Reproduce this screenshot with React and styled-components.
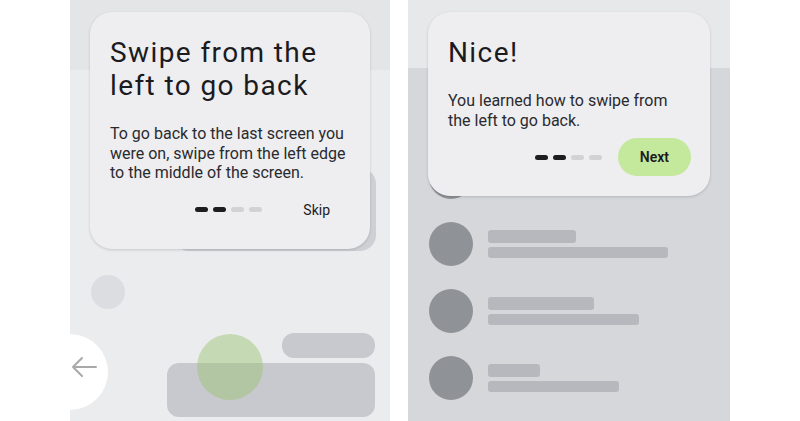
import React from 'react';
import styled, { createGlobalStyle } from 'styled-components';

const GlobalStyle = createGlobalStyle`
  html, body {
    margin: 0;
    padding: 0;
    background: #ffffff;
    font-family: Roboto, "Noto Sans", "Liberation Sans", sans-serif;
  }
`;

const Stage = styled.div`
  display: flex;
  gap: 18px;
  padding-left: 70px;
  width: 800px;
  height: 421px;
  box-sizing: border-box;
`;

const Phone = styled.div`
  position: relative;
  overflow: hidden;
  width: ${(p) => p.$w}px;
  height: 421px;
  box-sizing: border-box;
  display: flex;
  flex-direction: column;
  background: linear-gradient(${(p) => p.$top} 0 ${(p) => p.$band}px, ${(p) => p.$body} ${(p) => p.$band}px);
  padding: ${(p) => p.$pad};
`;

/* tutorial card floating over the screen */
const Card = styled.div`
  position: absolute;
  top: 12px;
  left: 20px;
  width: ${(p) => p.$w}px;
  box-sizing: border-box;
  padding: 24px 20px 20px 20px;
  background: #eeeef0;
  border-radius: 22px;
  box-shadow: 0 1px 3px rgba(0, 0, 0, 0.16);
  z-index: 2;
`;

const Title = styled.h1`
  margin: 0;
  font-size: 28px;
  line-height: 33px;
  font-weight: 400;
  color: #1b1b1f;
  letter-spacing: 1.4px;
`;

const Body = styled.p`
  margin: 22px 0 0;
  font-size: 16px;
  line-height: 19.5px;
  color: #2a2a2e;
`;

const Footer = styled.div`
  margin-top: 8px;
  height: 38px;
  display: flex;
  justify-content: flex-end;
  align-items: center;
`;

const Dots = styled.div`
  display: flex;
  gap: 5px;
  margin-right: ${(p) => p.$space}px;
`;

const Dot = styled.span`
  width: 13px;
  height: 5px;
  border-radius: 3px;
  background: ${(p) => (p.$on ? '#1d1d1f' : '#d2d2d5')};
`;

const Action = styled.button`
  height: 38px;
  border: none;
  border-radius: 19px;
  padding: 0 ${(p) => (p.$filled ? 22 : 20)}px;
  margin-right: ${(p) => (p.$filled ? -1 : 0)}px;
  background: ${(p) => (p.$filled ? '#c4e99c' : 'transparent')};
  font-family: inherit;
  font-size: 14px;
  font-weight: ${(p) => (p.$filled ? 600 : 400)};
  color: #1c1c1e;
`;

/* app placeholder blocks behind the card */
const Block = styled.div`
  width: ${(p) => p.$w}px;
  height: ${(p) => p.$h}px;
  margin: ${(p) => p.$m};
  border-radius: ${(p) => p.$r}px;
  background: ${(p) => p.$c};
  align-self: ${(p) => (p.$end ? 'flex-end' : 'flex-start')};
  flex-shrink: 0;
`;

const BackEdge = styled.div`
  position: absolute;
  left: -38px;
  top: 334px;
  width: 76px;
  height: 76px;
  border-radius: 50%;
  background: #ffffff;
  display: flex;
  align-items: center;
  justify-content: flex-end;
  padding-right: 11px;
  box-sizing: border-box;
  z-index: 2;

  svg {
    margin-top: -10px;
  }
`;

const Touch = styled.div`
  position: absolute;
  left: 127px;
  top: 334px;
  width: 66px;
  height: 66px;
  border-radius: 50%;
  background: rgba(150, 195, 110, 0.45);
  z-index: 3;
`;

const List = styled.div`
  display: flex;
  flex-direction: column;
  gap: 23px;
`;

const Row = styled.div`
  display: flex;
  gap: 15px;
  align-items: flex-start;
`;

const Avatar = styled.div`
  width: 44px;
  height: 44px;
  border-radius: 50%;
  background: #8f9297;
  flex-shrink: 0;
`;

const Lines = styled.div`
  display: flex;
  flex-direction: column;
  gap: 4px;
  padding-top: 8px;
`;

const Bar = styled.div`
  width: ${(p) => p.$w}px;
  height: ${(p) => p.$h}px;
  border-radius: 3px;
  background: #b6b8bd;
`;

const rows = [
  [88, 180],
  [88, 180],
  [106, 151],
  [52, 131],
];

const Pager = ({ space }) => (
  <Dots $space={space}>
    <Dot $on />
    <Dot $on />
    <Dot />
    <Dot />
  </Dots>
);

export default function App() {
  return (
    <>
      <GlobalStyle />
      <Stage>
        <Phone $w={320} $band={70} $top="#e4e5e7" $body="#ebecee" $pad="168px 15px 0 0">
          <Card $w={280}>
            <Title>
              Swipe from the
              <br />
              left to go back
            </Title>
            <Body>
              To go back to the last screen you
              <br />
              were on, swipe from the left edge
              <br />
              to the middle of the screen.
            </Body>
            <Footer>
              <Pager space={21} />
              <Action>Skip</Action>
            </Footer>
          </Card>

          <Block $w={203} $h={83} $r={16} $c="#cfd0d4" $m="0 0 0 103px" />
          <Block $w={34} $h={34} $r={17} $c="#dcdde0" $m="24px 0 0 21px" />
          <Block $w={93} $h={25} $r={12} $c="#c8c9ce" $m="24px 0 0 0" $end />
          <Block $w={208} $h={54} $r={12} $c="#c8c9ce" $m="5px 0 0 97px" />

          <BackEdge>
            <svg width="26" height="22" viewBox="0 0 26 22" fill="none" stroke="#a9a9ab" strokeWidth="2" strokeLinecap="round" strokeLinejoin="round">
              <path d="M25 11H2M11 2L2 11l9 9" />
            </svg>
          </BackEdge>
          <Touch />
        </Phone>

        <Phone $w={322} $band={68} $top="#e7e8ea" $body="#d6d7db" $pad="155px 0 0 21px">
          <Card $w={282}>
            <Title>Nice!</Title>
            <Body>
              You learned how to swipe from
              <br />
              the left to go back.
            </Body>
            <Footer>
              <Pager space={16} />
              <Action $filled>Next</Action>
            </Footer>
          </Card>

          <List>
            {rows.map(([a, b], i) => (
              <Row key={i}>
                <Avatar />
                <Lines>
                  <Bar $w={a} $h={13} />
                  <Bar $w={b} $h={11} />
                </Lines>
              </Row>
            ))}
          </List>
        </Phone>
      </Stage>
    </>
  );
}
